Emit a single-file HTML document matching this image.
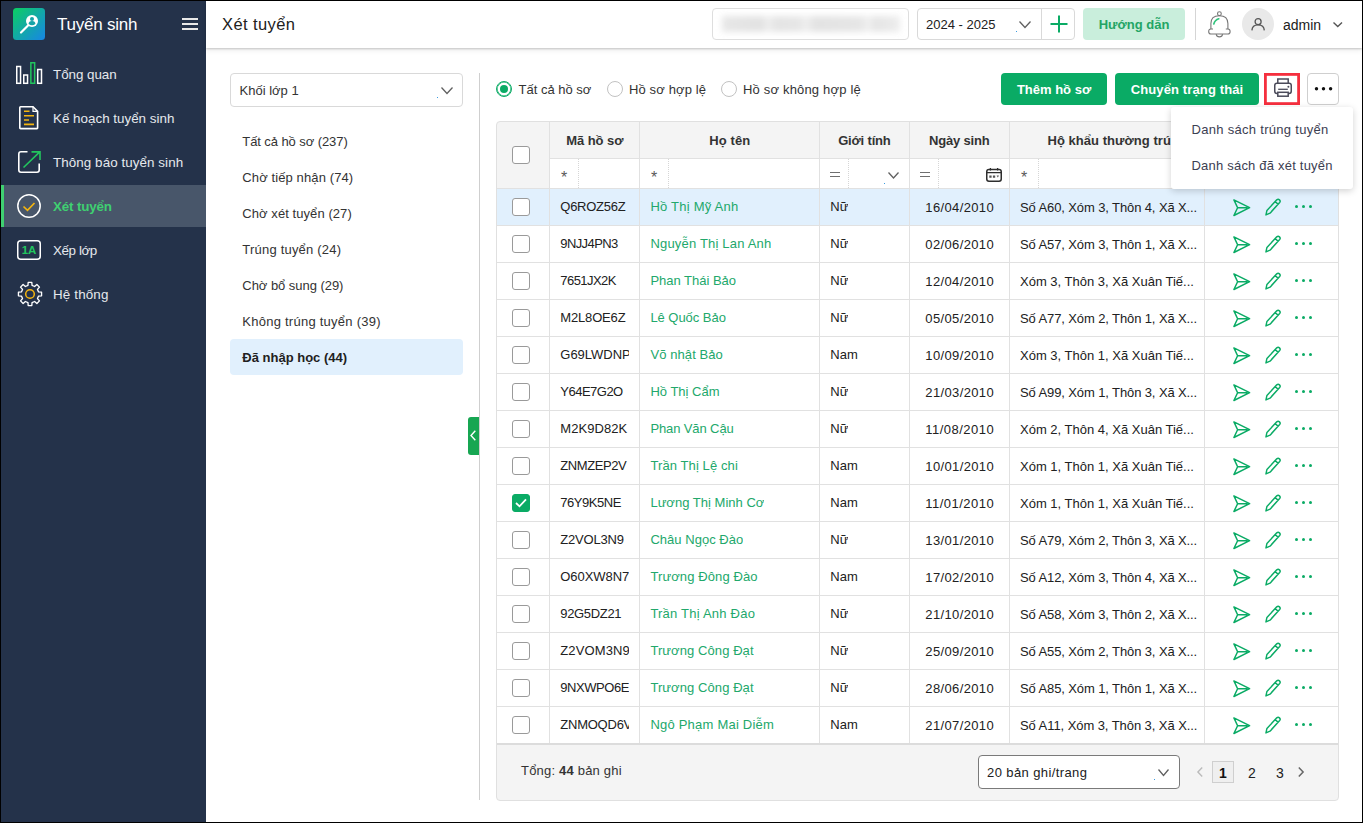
<!DOCTYPE html>
<html><head><meta charset="utf-8"><title>Xét tuyển</title><style>
*{box-sizing:border-box;margin:0;padding:0}
html,body{width:1363px;height:823px;overflow:hidden;background:#fff}
body{font-family:"Liberation Sans",sans-serif;font-size:13px;color:#212121;position:relative}
.a{position:absolute}
.t{position:absolute;white-space:nowrap;line-height:16px}
#frame{position:absolute;left:0;top:0;width:1363px;height:823px;border:1px solid #000;z-index:100}
#side{position:absolute;left:1px;top:1px;width:205px;height:821px;background:#24324a}
.mi{position:absolute;left:1px;width:205px;height:44px;color:#e6e9ed;font-size:13.4px}
.mi .t{left:52px;top:15px}
.mi.act{background:#48566a;color:#3fd071;font-weight:bold}
.mi.act:before{content:"";position:absolute;left:0;top:0;width:3px;height:42px;background:#3fd071}
#top{position:absolute;left:206px;top:1px;width:1156px;height:47px;background:#fff;box-shadow:0 1px 2px rgba(0,0,0,.2),0 3px 5px rgba(0,0,0,.06)}
.box{position:absolute;border:1px solid #d9d9d9;border-radius:4px;background:#fff}
.li{position:absolute;left:230px;width:233px;height:36px;color:#333}
.li .t{left:12.3px;top:11px}
.li.act{background:#e1f0fd;border-radius:4px;font-weight:bold;color:#212121}
.btn{position:absolute;height:32px;border-radius:4px;background:#0aab65;color:#fff;font-weight:bold;font-size:13px;text-align:center;line-height:33px;white-space:nowrap}
#tbl{position:absolute;left:496px;top:121px;width:843px;height:680px;border:1px solid #e0e0e0;border-radius:4px;background:#f4f4f4}
.vl{position:absolute;width:1px;background:#e1e1e1}
.hl{position:absolute;height:1px;background:#e1e1e1}
.dl{position:absolute;width:0;border-left:1px dotted #d6d6d6;top:159px;height:29px}
.th{position:absolute;top:133px;font-weight:bold;color:#333;text-align:center;white-space:nowrap;line-height:16px}
.row{position:absolute;left:497px;width:841px;height:37px;background:#fff}
.row.hi{background:#e1f0fd}
.row .t{top:10px;overflow:hidden}
.row .nm{color:#22a86b}
.cb{position:absolute;width:18px;height:18px;border:1px solid #9a9a9a;border-radius:3px;background:#fff}
.cb.on{background:#0aab65;border-color:#0aab65}
.rad{position:absolute;width:16px;height:16px;border:1px solid #c2c2c2;border-radius:50%;background:#fff}
.rad.on{border-color:#0aab65;box-shadow:inset 0 0 0 0.6px #0aab65}
.rad.on:after{content:"";position:absolute;left:3px;top:3px;width:8px;height:8px;border-radius:50%;background:#0aab65}
svg{position:absolute;overflow:visible}
</style></head><body>
<div id="side"></div>
<svg style="left:13px;top:8px" width="32" height="32" viewBox="0 0 32 32"><defs><linearGradient id="lg" x1="0" y1="0" x2="1" y2="1"><stop offset="0" stop-color="#0bd061"/><stop offset="0.5" stop-color="#12a9a6"/><stop offset="1" stop-color="#1786e6"/></linearGradient></defs>
<rect width="32" height="32" rx="3.5" fill="url(#lg)"/>
<path d="M8 24.5 L15 17.5" stroke="#fff" stroke-width="2.2" stroke-linecap="round"/>
<circle cx="19" cy="13" r="6" fill="#fff"/>
<circle cx="19" cy="11" r="2" fill="#14a3a8"/>
<path d="M15.6 16 Q15.6 13 19 13 Q22.4 13 22.4 16 Q19 18.6 15.6 16Z" fill="#14a3a8"/>
</svg>
<div class="t" style="left:57px;top:14px;font-size:17px;line-height:22px;color:#fff"><span style="letter-spacing:-0.23px">Tuyển sinh</span></div>
<div class="a" style="left:182px;top:18px;width:16px;height:2px;background:#e8e8e8"></div>
<div class="a" style="left:182px;top:23px;width:16px;height:2px;background:#e8e8e8"></div>
<div class="a" style="left:182px;top:28px;width:16px;height:2px;background:#e8e8e8"></div>
<div class="mi" style="top:52px"><div class="t"><span style="letter-spacing:-0.05px">Tổng quan</span></div></div>
<div class="mi" style="top:96px"><div class="t"><span style="letter-spacing:0.00px">Kế hoạch tuyển sinh</span></div></div>
<div class="mi" style="top:140px"><div class="t"><span style="letter-spacing:0.07px">Thông báo tuyển sinh</span></div></div>
<div class="mi act" style="top:185px;height:42px"><div class="t" style="top:14px"><span style="letter-spacing:-0.16px">Xét tuyển</span></div></div>
<div class="mi" style="top:228px"><div class="t"><span style="letter-spacing:-0.41px">Xếp lớp</span></div></div>
<div class="mi" style="top:272px"><div class="t"><span style="letter-spacing:0.15px">Hệ thống</span></div></div>
<svg style="left:16px;top:62px" width="26" height="22" viewBox="0 0 26 22" fill="none" stroke-width="1.5">
<rect x="0.75" y="4.5" width="3.8" height="16.8" stroke="#fff"/>
<rect x="7.75" y="13" width="3.8" height="8.3" stroke="#fff"/>
<rect x="14.85" y="0.75" width="3.8" height="20.5" stroke="#22c55e"/>
<rect x="21.7" y="7.5" width="3.8" height="13.8" stroke="#fff"/></svg>
<svg style="left:19px;top:106px" width="20" height="24" viewBox="0 0 20 24" fill="none">
<path d="M1.6 0.8 H14 L18.6 5.4 V22 Q18.6 22.6 18 22.6 H1.6 Q0.8 22.6 0.8 22 V1.6 Q0.8 0.8 1.6 0.8Z" stroke="#fff" stroke-width="1.6"/>
<path d="M14 0.8 V5.4 H18.6" stroke="#fff" stroke-width="1.2"/>
<path d="M5 5.2 H10.5 M5 9.7 H15 M5 14 H10 M5 18.4 H15" stroke="#f5b50f" stroke-width="1.6"/></svg>
<svg style="left:18px;top:151px" width="23" height="22" viewBox="0 0 23 22" fill="none">
<path d="M9.5 0.8 H3 Q0.8 0.8 0.8 3 V19 Q0.8 21.2 3 21.2 H19 Q21.2 21.2 21.2 19 V12.5" stroke="#fff" stroke-width="1.6"/>
<path d="M5.5 16.5 L21.5 1.2 M13.5 0.9 H22 V9" stroke="#22c55e" stroke-width="1.6"/></svg>
<svg style="left:17px;top:194px" width="24" height="24" viewBox="0 0 24 24" fill="none">
<circle cx="12" cy="12" r="11.2" stroke="#fff" stroke-width="1.5"/>
<path d="M6.5 12.5 L10.5 16.3 L17.5 9" stroke="#f5b50f" stroke-width="1.7"/></svg>
<svg style="left:17px;top:240px" width="24" height="20" viewBox="0 0 24 20" fill="none">
<rect x="0.75" y="0.75" width="22.5" height="18.5" rx="3" stroke="#fff" stroke-width="1.5"/>
<text x="12" y="14.3" text-anchor="middle" font-family="Liberation Sans" font-weight="bold" font-size="11.5" fill="#22c55e">1A</text></svg>
<svg style="left:17px;top:281px" width="26" height="26" viewBox="0 0 26 26" fill="none">
<path d="M10.95 4.44 L11.17 1.44 L14.83 1.44 L15.05 4.44 L17.60 5.50 L19.88 3.53 L22.47 6.12 L20.50 8.40 L21.56 10.95 L24.56 11.17 L24.56 14.83 L21.56 15.05 L20.50 17.60 L22.47 19.88 L19.88 22.47 L17.60 20.50 L15.05 21.56 L14.83 24.56 L11.17 24.56 L10.95 21.56 L8.40 20.50 L6.12 22.47 L3.53 19.88 L5.50 17.60 L4.44 15.05 L1.44 14.83 L1.44 11.17 L4.44 10.95 L5.50 8.40 L3.53 6.12 L6.12 3.53 L8.40 5.50Z" stroke="#fff" stroke-width="1.35" stroke-linejoin="round"/>
<circle cx="13" cy="13" r="4.3" stroke="#f5b50f" stroke-width="1.5"/></svg>
<div id="top"></div>
<div class="t" style="left:222px;top:13px;font-size:16.5px;line-height:22px;color:#212121"><span style="letter-spacing:0.41px">Xét tuyển</span></div>
<div class="box" style="left:712px;top:8px;width:197px;height:32px;border-color:#dedede"></div>
<div class="a" style="left:722px;top:16px;width:178px;height:16px;filter:blur(3px);opacity:.44;background:linear-gradient(90deg,#c9c9c9 0,#bdbdbd 22%,#dcdcdc 26%,#c3c3c3 30%,#c8c8c8 44%,#dedede 47%,#bfbfbf 52%,#c6c6c6 78%,#e0e0e0 82%,#c4c4c4 86%,#d6d6d6 100%)"></div>
<div class="box" style="left:917px;top:8px;width:158px;height:32px"></div>
<div class="a" style="left:1041px;top:9px;width:1px;height:30px;background:#d9d9d9"></div>
<div class="t" style="left:926px;top:17px;color:#212121">2024 - 2025</div>
<svg style="left:1019px;top:21px" width="12" height="7" viewBox="0 0 12 7"><path d="M0.5 0.5 L6.0 6.5 L11.5 0.5" fill="none" stroke="#606060" stroke-width="1.3"/></svg>
<div class="a" style="left:1016px;top:31px;width:1px;height:1px;background:#3b9be0"></div>
<svg style="left:1050px;top:15px" width="18" height="18" viewBox="0 0 18 18"><path d="M9 0.5 V17.5 M0.5 9 H17.5" stroke="#0aab65" stroke-width="2"/></svg>
<div class="a" style="left:1083px;top:8px;width:102px;height:32px;border-radius:4px;background:#c9eedc;color:#23a565;font-weight:bold;font-size:13px;line-height:33px;text-align:center">Hướng dẫn</div>
<div class="a" style="left:1195px;top:8px;width:1px;height:32px;background:#d5d5d5"></div>
<svg style="left:1208px;top:10.5px" width="23" height="27" viewBox="0 0 23 27" fill="none" stroke="#777" stroke-width="1.1">
<circle cx="11.4" cy="2.7" r="1.9"/>
<path d="M2.9 18 V12.6 Q2.9 4.7 11.4 4.7 Q19.9 4.7 19.9 12.6 V18"/>
<path d="M5 18 H2.9 Q0.7 18 0.7 20.4 Q0.7 23 2.9 23 H19.9 Q22.1 23 22.1 20.4 Q22.1 18 19.9 18 H17.8"/>
<path d="M8.2 23.2 Q8.6 25.9 11.4 25.9 Q14.2 25.9 14.6 23.2"/>
<path d="M5.8 13 Q6.8 8.9 10.8 7.7" stroke="#2fc47c" stroke-width="1.6" stroke-linecap="round"/></svg>
<div class="a" style="left:1242px;top:8px;width:32px;height:32px;border-radius:50%;background:#e9e9e9"></div>
<svg style="left:1251px;top:17.5px" width="14" height="13" viewBox="0 0 14 13" fill="none" stroke="#555" stroke-width="1.3">
<circle cx="7.1" cy="3.7" r="3"/><path d="M0.9 12.4 Q1.2 6.8 7.1 6.8 Q13 6.8 13.3 12.4"/></svg>
<div class="t" style="left:1283px;top:16.5px;font-size:14px;color:#212121">admin</div>
<svg style="left:1332.5px;top:21.5px" width="9.5" height="5" viewBox="0 0 9.5 5"><path d="M0.5 0.5 L4.75 4.5 L9.0 0.5" fill="none" stroke="#555" stroke-width="1.4"/></svg>
<div class="box" style="left:230px;top:73px;width:233px;height:34px"></div>
<div class="t" style="left:239.5px;top:83px;color:#333">Khối lớp 1</div>
<svg style="left:441px;top:87px" width="12" height="7" viewBox="0 0 12 7"><path d="M0.5 0.5 L6.0 6.5 L11.5 0.5" fill="none" stroke="#606060" stroke-width="1.3"/></svg>
<div class="a" style="left:437px;top:97px;width:1px;height:1px;background:#3b9be0"></div>
<div class="li" style="top:123px"><div class="t"><span style="letter-spacing:-0.08px">Tất cả hồ sơ (237)</span></div></div>
<div class="li" style="top:159px"><div class="t"><span style="letter-spacing:0.11px">Chờ tiếp nhận (74)</span></div></div>
<div class="li" style="top:195px"><div class="t"><span style="letter-spacing:0.07px">Chờ xét tuyển (27)</span></div></div>
<div class="li" style="top:231px"><div class="t"><span style="letter-spacing:0.21px">Trúng tuyển (24)</span></div></div>
<div class="li" style="top:267px"><div class="t"><span style="letter-spacing:-0.04px">Chờ bổ sung (29)</span></div></div>
<div class="li" style="top:303px"><div class="t"><span style="letter-spacing:0.25px">Không trúng tuyển (39)</span></div></div>
<div class="li act" style="top:339px"><div class="t"><span style="letter-spacing:0.00px">Đã nhập học (44)</span></div></div>
<div class="a" style="left:479px;top:73px;width:1px;height:727px;background:#cfcfcf"></div>
<div class="a" style="left:468px;top:417px;width:11px;height:37.5px;background:#17a652;border-radius:3px 0 0 3px"></div>
<svg style="left:469.5px;top:430px" width="6" height="11" viewBox="0 0 6 11"><path d="M5.3 0.7 L1 5.5 L5.3 10.3" fill="none" stroke="#fff" stroke-width="1.4"/></svg>
<div class="rad on" style="left:496px;top:81px"></div><div class="t" style="left:518.5px;top:82px;color:#333">Tất cả hồ sơ</div>
<div class="rad" style="left:607px;top:81px"></div><div class="t" style="left:629px;top:82px;color:#333"><span style="letter-spacing:0.13px">Hồ sơ hợp lệ</span></div>
<div class="rad" style="left:721px;top:81px"></div><div class="t" style="left:743px;top:82px;color:#333"><span style="letter-spacing:0.18px">Hồ sơ không hợp lệ</span></div>
<div class="btn" style="left:1001px;top:73px;width:106px">Thêm hồ sơ</div>
<div class="btn" style="left:1115px;top:73px;width:144px"><span style="letter-spacing:0.13px">Chuyển trạng thái</span></div>
<svg style="left:1264px;top:73px" width="36" height="32" viewBox="0 0 36 32"><rect x="1.4" y="1.4" width="33.2" height="29.2" fill="#fff" stroke="#f52f3e" stroke-width="2.8"/></svg>
<svg style="left:1273.8px;top:78.2px" width="18" height="19" viewBox="0 0 18 19" fill="none" stroke="#4b4b5a" stroke-width="1.5">
<path d="M3.8 5.3 V0.9 H14.2 V5.3"/>
<rect x="0.75" y="5.3" width="16.5" height="10.2" rx="2.2"/>
<path d="M4.2 11.3 H13.8" stroke-width="1.3"/>
<rect x="3.8" y="14.3" width="10.4" height="3.9" fill="#fff"/>
<circle cx="14.4" cy="8.8" r="1" fill="#4b4b5a" stroke="none"/></svg>
<div class="box" style="left:1307px;top:73px;width:32px;height:32px;border-color:#cfcfcf"></div>
<svg style="left:1307px;top:73px" width="32" height="32" viewBox="0 0 32 32"><circle cx="9.5" cy="15.7" r="1.7" fill="#111"/><circle cx="16.5" cy="15.7" r="1.7" fill="#111"/><circle cx="23.6" cy="15.7" r="1.7" fill="#111"/></svg>
<div id="tbl"></div>
<div class="a" style="left:550px;top:159px;width:654px;height:29px;background:#fff"></div>
<div class="hl" style="left:549px;top:158px;width:789px"></div>
<div class="hl" style="left:497px;top:188px;width:841px"></div>
<div class="th" style="left:566.2px;text-align:left"><span style="letter-spacing:-0.05px">Mã hồ sơ</span></div>
<div class="th" style="left:709.2px;text-align:left"><span style="letter-spacing:0.11px">Họ tên</span></div>
<div class="th" style="left:838.2px;text-align:left"><span style="letter-spacing:-0.18px">Giới tính</span></div>
<div class="th" style="left:929px;text-align:left"><span style="letter-spacing:-0.17px">Ngày sinh</span></div>
<div class="th" style="left:1047.5px;text-align:left"><span style="letter-spacing:0.04px">Hộ khẩu thường trú</span></div>
<div class="cb" style="left:512px;top:146px"></div>
<div class="dl" style="left:578px"></div>
<div class="dl" style="left:668px"></div>
<div class="dl" style="left:848px"></div>
<div class="dl" style="left:938px"></div>
<div class="dl" style="left:1038px"></div>
<div class="t" style="left:561px;top:169.5px;font-size:16px;color:#5a5a5a">*</div>
<div class="t" style="left:651px;top:169.5px;font-size:16px;color:#5a5a5a">*</div>
<div class="t" style="left:1021px;top:169.5px;font-size:16px;color:#5a5a5a">*</div>
<div class="a" style="left:830px;top:172px;width:10px;height:1px;background:#6f6f6f"></div><div class="a" style="left:830px;top:176px;width:10px;height:1px;background:#6f6f6f"></div>
<div class="a" style="left:920px;top:172px;width:10px;height:1px;background:#6f6f6f"></div><div class="a" style="left:920px;top:176px;width:10px;height:1px;background:#6f6f6f"></div>
<svg style="left:888px;top:172px" width="11" height="6.5" viewBox="0 0 11 6.5"><path d="M0.5 0.5 L5.5 6.0 L10.5 0.5" fill="none" stroke="#606060" stroke-width="1.3"/></svg>
<div class="a" style="left:884px;top:183px;width:1px;height:1px;background:#3b9be0"></div>
<svg style="left:986px;top:168px" width="16" height="14" viewBox="0 0 16 14" fill="none" stroke="#2e2e2e" stroke-width="1.5">
<rect x="0.75" y="1.6" width="14.5" height="11.6" rx="2.2"/><path d="M0.7 4.6 H15.3 M4.4 0 V2.6 M11.6 0 V2.6" stroke-width="1.3"/>
<path d="M3.3 8.6 H5.6 M6.9 8.6 H9.2" stroke-width="2.4" stroke="#555"/><path d="M10.6 7.6 H13 L11.8 9.4Z" fill="#555" stroke="none"/></svg>
<div class="row hi" style="top:189px;height:36px"><div class="cb" style="left:15px;top:9px"></div><div class="t" style="left:63.3px;width:68.6px"><span style="letter-spacing:-0.27px">Q6ROZ56Z</span></div><div class="t nm" style="left:153.4px"><span style="letter-spacing:0.23px">Hồ Thị Mỹ Anh</span></div><div class="t" style="left:333.3px">Nữ</div><div class="t" style="left:428.3px;top:11px"><span style="letter-spacing:0.37px">16/04/2010</span></div><div class="t" style="left:523px;top:11px"><span style="letter-spacing:-0.11px">Số A60, Xóm 3, Thôn 4, Xã X...</span></div><svg style="left:736px;top:9.6px" width="18" height="18" viewBox="0 0 18 18"><path d="M0.9 0.9 L16.6 8.7 L0.9 16.5 L4.6 8.7Z M4.6 8.7 H14.5" fill="none" stroke="#0aab65" stroke-width="1.5" stroke-linejoin="round"/></svg><svg style="left:768px;top:8.8px" width="16.4" height="18" viewBox="0 0 17 18"><path d="M1 17.2 L2 12.6 L12.2 1.6 Q13.6 0.4 15 1.6 Q16.4 3 15.2 4.4 L5.2 15.4Z M10.6 3.4 L13.6 6.2" fill="none" stroke="#0aab65" stroke-width="1.5" stroke-linejoin="round"/></svg><div class="a" style="left:798px;top:16px;width:3px;height:3px;border-radius:50%;background:#0aab65"></div><div class="a" style="left:805px;top:16px;width:3px;height:3px;border-radius:50%;background:#0aab65"></div><div class="a" style="left:812px;top:16px;width:3px;height:3px;border-radius:50%;background:#0aab65"></div></div>
<div class="hl" style="left:497px;top:225px;width:841px"></div>
<div class="row" style="top:226px;height:36px"><div class="cb" style="left:15px;top:9px"></div><div class="t" style="left:63.3px;width:68.6px"><span style="letter-spacing:-0.60px">9NJJ4PN3</span></div><div class="t nm" style="left:153.4px"><span style="letter-spacing:0.19px">Nguyễn Thị Lan Anh</span></div><div class="t" style="left:333.3px">Nữ</div><div class="t" style="left:428.3px;top:11px"><span style="letter-spacing:0.37px">02/06/2010</span></div><div class="t" style="left:523px;top:11px"><span style="letter-spacing:-0.11px">Số A57, Xóm 3, Thôn 1, Xã X...</span></div><svg style="left:736px;top:9.6px" width="18" height="18" viewBox="0 0 18 18"><path d="M0.9 0.9 L16.6 8.7 L0.9 16.5 L4.6 8.7Z M4.6 8.7 H14.5" fill="none" stroke="#0aab65" stroke-width="1.5" stroke-linejoin="round"/></svg><svg style="left:768px;top:8.8px" width="16.4" height="18" viewBox="0 0 17 18"><path d="M1 17.2 L2 12.6 L12.2 1.6 Q13.6 0.4 15 1.6 Q16.4 3 15.2 4.4 L5.2 15.4Z M10.6 3.4 L13.6 6.2" fill="none" stroke="#0aab65" stroke-width="1.5" stroke-linejoin="round"/></svg><div class="a" style="left:798px;top:16px;width:3px;height:3px;border-radius:50%;background:#0aab65"></div><div class="a" style="left:805px;top:16px;width:3px;height:3px;border-radius:50%;background:#0aab65"></div><div class="a" style="left:812px;top:16px;width:3px;height:3px;border-radius:50%;background:#0aab65"></div></div>
<div class="hl" style="left:497px;top:262px;width:841px"></div>
<div class="row" style="top:263px;height:36px"><div class="cb" style="left:15px;top:9px"></div><div class="t" style="left:63.3px;width:68.6px"><span style="letter-spacing:-0.56px">7651JX2K</span></div><div class="t nm" style="left:153.4px"><span style="letter-spacing:-0.01px">Phan Thái Bảo</span></div><div class="t" style="left:333.3px">Nữ</div><div class="t" style="left:428.3px;top:11px"><span style="letter-spacing:0.37px">12/04/2010</span></div><div class="t" style="left:523px;top:11px"><span style="letter-spacing:-0.00px">Xóm 3, Thôn 3, Xã Xuân Tiế...</span></div><svg style="left:736px;top:9.6px" width="18" height="18" viewBox="0 0 18 18"><path d="M0.9 0.9 L16.6 8.7 L0.9 16.5 L4.6 8.7Z M4.6 8.7 H14.5" fill="none" stroke="#0aab65" stroke-width="1.5" stroke-linejoin="round"/></svg><svg style="left:768px;top:8.8px" width="16.4" height="18" viewBox="0 0 17 18"><path d="M1 17.2 L2 12.6 L12.2 1.6 Q13.6 0.4 15 1.6 Q16.4 3 15.2 4.4 L5.2 15.4Z M10.6 3.4 L13.6 6.2" fill="none" stroke="#0aab65" stroke-width="1.5" stroke-linejoin="round"/></svg><div class="a" style="left:798px;top:16px;width:3px;height:3px;border-radius:50%;background:#0aab65"></div><div class="a" style="left:805px;top:16px;width:3px;height:3px;border-radius:50%;background:#0aab65"></div><div class="a" style="left:812px;top:16px;width:3px;height:3px;border-radius:50%;background:#0aab65"></div></div>
<div class="hl" style="left:497px;top:299px;width:841px"></div>
<div class="row" style="top:300px;height:36px"><div class="cb" style="left:15px;top:9px"></div><div class="t" style="left:63.3px;width:68.6px"><span style="letter-spacing:-0.17px">M2L8OE6Z</span></div><div class="t nm" style="left:153.4px"><span style="letter-spacing:-0.04px">Lê Quốc Bảo</span></div><div class="t" style="left:333.3px">Nữ</div><div class="t" style="left:428.3px;top:11px"><span style="letter-spacing:0.37px">05/05/2010</span></div><div class="t" style="left:523px;top:11px"><span style="letter-spacing:-0.11px">Số A77, Xóm 2, Thôn 1, Xã X...</span></div><svg style="left:736px;top:9.6px" width="18" height="18" viewBox="0 0 18 18"><path d="M0.9 0.9 L16.6 8.7 L0.9 16.5 L4.6 8.7Z M4.6 8.7 H14.5" fill="none" stroke="#0aab65" stroke-width="1.5" stroke-linejoin="round"/></svg><svg style="left:768px;top:8.8px" width="16.4" height="18" viewBox="0 0 17 18"><path d="M1 17.2 L2 12.6 L12.2 1.6 Q13.6 0.4 15 1.6 Q16.4 3 15.2 4.4 L5.2 15.4Z M10.6 3.4 L13.6 6.2" fill="none" stroke="#0aab65" stroke-width="1.5" stroke-linejoin="round"/></svg><div class="a" style="left:798px;top:16px;width:3px;height:3px;border-radius:50%;background:#0aab65"></div><div class="a" style="left:805px;top:16px;width:3px;height:3px;border-radius:50%;background:#0aab65"></div><div class="a" style="left:812px;top:16px;width:3px;height:3px;border-radius:50%;background:#0aab65"></div></div>
<div class="hl" style="left:497px;top:336px;width:841px"></div>
<div class="row" style="top:337px;height:36px"><div class="cb" style="left:15px;top:9px"></div><div class="t" style="left:63.3px;width:68.6px"><span style="letter-spacing:-0.01px">G69LWDNP</span></div><div class="t nm" style="left:153.4px"><span style="letter-spacing:0.09px">Võ nhật Bảo</span></div><div class="t" style="left:333.3px">Nam</div><div class="t" style="left:428.3px;top:11px"><span style="letter-spacing:0.37px">10/09/2010</span></div><div class="t" style="left:523px;top:11px"><span style="letter-spacing:-0.00px">Xóm 3, Thôn 1, Xã Xuân Tiế...</span></div><svg style="left:736px;top:9.6px" width="18" height="18" viewBox="0 0 18 18"><path d="M0.9 0.9 L16.6 8.7 L0.9 16.5 L4.6 8.7Z M4.6 8.7 H14.5" fill="none" stroke="#0aab65" stroke-width="1.5" stroke-linejoin="round"/></svg><svg style="left:768px;top:8.8px" width="16.4" height="18" viewBox="0 0 17 18"><path d="M1 17.2 L2 12.6 L12.2 1.6 Q13.6 0.4 15 1.6 Q16.4 3 15.2 4.4 L5.2 15.4Z M10.6 3.4 L13.6 6.2" fill="none" stroke="#0aab65" stroke-width="1.5" stroke-linejoin="round"/></svg><div class="a" style="left:798px;top:16px;width:3px;height:3px;border-radius:50%;background:#0aab65"></div><div class="a" style="left:805px;top:16px;width:3px;height:3px;border-radius:50%;background:#0aab65"></div><div class="a" style="left:812px;top:16px;width:3px;height:3px;border-radius:50%;background:#0aab65"></div></div>
<div class="hl" style="left:497px;top:373px;width:841px"></div>
<div class="row" style="top:374px;height:36px"><div class="cb" style="left:15px;top:9px"></div><div class="t" style="left:63.3px;width:68.6px"><span style="letter-spacing:-0.51px">Y64E7G2O</span></div><div class="t nm" style="left:153.4px"><span style="letter-spacing:-0.00px">Hồ Thị Cẩm</span></div><div class="t" style="left:333.3px">Nữ</div><div class="t" style="left:428.3px;top:11px"><span style="letter-spacing:0.37px">21/03/2010</span></div><div class="t" style="left:523px;top:11px"><span style="letter-spacing:-0.11px">Số A99, Xóm 1, Thôn 3, Xã X...</span></div><svg style="left:736px;top:9.6px" width="18" height="18" viewBox="0 0 18 18"><path d="M0.9 0.9 L16.6 8.7 L0.9 16.5 L4.6 8.7Z M4.6 8.7 H14.5" fill="none" stroke="#0aab65" stroke-width="1.5" stroke-linejoin="round"/></svg><svg style="left:768px;top:8.8px" width="16.4" height="18" viewBox="0 0 17 18"><path d="M1 17.2 L2 12.6 L12.2 1.6 Q13.6 0.4 15 1.6 Q16.4 3 15.2 4.4 L5.2 15.4Z M10.6 3.4 L13.6 6.2" fill="none" stroke="#0aab65" stroke-width="1.5" stroke-linejoin="round"/></svg><div class="a" style="left:798px;top:16px;width:3px;height:3px;border-radius:50%;background:#0aab65"></div><div class="a" style="left:805px;top:16px;width:3px;height:3px;border-radius:50%;background:#0aab65"></div><div class="a" style="left:812px;top:16px;width:3px;height:3px;border-radius:50%;background:#0aab65"></div></div>
<div class="hl" style="left:497px;top:410px;width:841px"></div>
<div class="row" style="top:411px;height:36px"><div class="cb" style="left:15px;top:9px"></div><div class="t" style="left:63.3px;width:68.6px"><span style="letter-spacing:0.07px">M2K9D82K</span></div><div class="t nm" style="left:153.4px"><span style="letter-spacing:-0.11px">Phan Văn Cậu</span></div><div class="t" style="left:333.3px">Nữ</div><div class="t" style="left:428.3px;top:11px"><span style="letter-spacing:0.48px">11/08/2010</span></div><div class="t" style="left:523px;top:11px"><span style="letter-spacing:-0.00px">Xóm 2, Thôn 4, Xã Xuân Tiế...</span></div><svg style="left:736px;top:9.6px" width="18" height="18" viewBox="0 0 18 18"><path d="M0.9 0.9 L16.6 8.7 L0.9 16.5 L4.6 8.7Z M4.6 8.7 H14.5" fill="none" stroke="#0aab65" stroke-width="1.5" stroke-linejoin="round"/></svg><svg style="left:768px;top:8.8px" width="16.4" height="18" viewBox="0 0 17 18"><path d="M1 17.2 L2 12.6 L12.2 1.6 Q13.6 0.4 15 1.6 Q16.4 3 15.2 4.4 L5.2 15.4Z M10.6 3.4 L13.6 6.2" fill="none" stroke="#0aab65" stroke-width="1.5" stroke-linejoin="round"/></svg><div class="a" style="left:798px;top:16px;width:3px;height:3px;border-radius:50%;background:#0aab65"></div><div class="a" style="left:805px;top:16px;width:3px;height:3px;border-radius:50%;background:#0aab65"></div><div class="a" style="left:812px;top:16px;width:3px;height:3px;border-radius:50%;background:#0aab65"></div></div>
<div class="hl" style="left:497px;top:447px;width:841px"></div>
<div class="row" style="top:448px;height:36px"><div class="cb" style="left:15px;top:9px"></div><div class="t" style="left:63.3px;width:68.6px"><span style="letter-spacing:-0.43px">ZNMZEP2V</span></div><div class="t nm" style="left:153.4px"><span style="letter-spacing:0.10px">Trần Thị Lệ chi</span></div><div class="t" style="left:333.3px">Nam</div><div class="t" style="left:428.3px;top:11px"><span style="letter-spacing:0.37px">10/01/2010</span></div><div class="t" style="left:523px;top:11px"><span style="letter-spacing:-0.00px">Xóm 1, Thôn 1, Xã Xuân Tiế...</span></div><svg style="left:736px;top:9.6px" width="18" height="18" viewBox="0 0 18 18"><path d="M0.9 0.9 L16.6 8.7 L0.9 16.5 L4.6 8.7Z M4.6 8.7 H14.5" fill="none" stroke="#0aab65" stroke-width="1.5" stroke-linejoin="round"/></svg><svg style="left:768px;top:8.8px" width="16.4" height="18" viewBox="0 0 17 18"><path d="M1 17.2 L2 12.6 L12.2 1.6 Q13.6 0.4 15 1.6 Q16.4 3 15.2 4.4 L5.2 15.4Z M10.6 3.4 L13.6 6.2" fill="none" stroke="#0aab65" stroke-width="1.5" stroke-linejoin="round"/></svg><div class="a" style="left:798px;top:16px;width:3px;height:3px;border-radius:50%;background:#0aab65"></div><div class="a" style="left:805px;top:16px;width:3px;height:3px;border-radius:50%;background:#0aab65"></div><div class="a" style="left:812px;top:16px;width:3px;height:3px;border-radius:50%;background:#0aab65"></div></div>
<div class="hl" style="left:497px;top:484px;width:841px"></div>
<div class="row" style="top:485px;height:36px"><div class="cb on" style="left:15px;top:9px"></div><div class="t" style="left:63.3px;width:68.6px"><span style="letter-spacing:-0.45px">76Y9K5NE</span></div><div class="t nm" style="left:153.4px"><span style="letter-spacing:0.02px">Lương Thị Minh Cơ</span></div><div class="t" style="left:333.3px">Nam</div><div class="t" style="left:428.3px;top:11px"><span style="letter-spacing:0.48px">11/01/2010</span></div><div class="t" style="left:523px;top:11px"><span style="letter-spacing:-0.00px">Xóm 1, Thôn 1, Xã Xuân Tiế...</span></div><svg style="left:736px;top:9.6px" width="18" height="18" viewBox="0 0 18 18"><path d="M0.9 0.9 L16.6 8.7 L0.9 16.5 L4.6 8.7Z M4.6 8.7 H14.5" fill="none" stroke="#0aab65" stroke-width="1.5" stroke-linejoin="round"/></svg><svg style="left:768px;top:8.8px" width="16.4" height="18" viewBox="0 0 17 18"><path d="M1 17.2 L2 12.6 L12.2 1.6 Q13.6 0.4 15 1.6 Q16.4 3 15.2 4.4 L5.2 15.4Z M10.6 3.4 L13.6 6.2" fill="none" stroke="#0aab65" stroke-width="1.5" stroke-linejoin="round"/></svg><div class="a" style="left:798px;top:16px;width:3px;height:3px;border-radius:50%;background:#0aab65"></div><div class="a" style="left:805px;top:16px;width:3px;height:3px;border-radius:50%;background:#0aab65"></div><div class="a" style="left:812px;top:16px;width:3px;height:3px;border-radius:50%;background:#0aab65"></div></div>
<svg style="left:515px;top:498px" width="12" height="10" viewBox="0 0 12 10"><path d="M1 5 L4.5 8.3 L11 1.3" fill="none" stroke="#fff" stroke-width="1.8"/></svg>
<div class="hl" style="left:497px;top:521px;width:841px"></div>
<div class="row" style="top:522px;height:36px"><div class="cb" style="left:15px;top:9px"></div><div class="t" style="left:63.3px;width:68.6px"><span style="letter-spacing:-0.21px">Z2VOL3N9</span></div><div class="t nm" style="left:153.4px"><span style="letter-spacing:0.03px">Châu Ngọc Đào</span></div><div class="t" style="left:333.3px">Nữ</div><div class="t" style="left:428.3px;top:11px"><span style="letter-spacing:0.37px">13/01/2010</span></div><div class="t" style="left:523px;top:11px"><span style="letter-spacing:-0.11px">Số A79, Xóm 2, Thôn 3, Xã X...</span></div><svg style="left:736px;top:9.6px" width="18" height="18" viewBox="0 0 18 18"><path d="M0.9 0.9 L16.6 8.7 L0.9 16.5 L4.6 8.7Z M4.6 8.7 H14.5" fill="none" stroke="#0aab65" stroke-width="1.5" stroke-linejoin="round"/></svg><svg style="left:768px;top:8.8px" width="16.4" height="18" viewBox="0 0 17 18"><path d="M1 17.2 L2 12.6 L12.2 1.6 Q13.6 0.4 15 1.6 Q16.4 3 15.2 4.4 L5.2 15.4Z M10.6 3.4 L13.6 6.2" fill="none" stroke="#0aab65" stroke-width="1.5" stroke-linejoin="round"/></svg><div class="a" style="left:798px;top:16px;width:3px;height:3px;border-radius:50%;background:#0aab65"></div><div class="a" style="left:805px;top:16px;width:3px;height:3px;border-radius:50%;background:#0aab65"></div><div class="a" style="left:812px;top:16px;width:3px;height:3px;border-radius:50%;background:#0aab65"></div></div>
<div class="hl" style="left:497px;top:558px;width:841px"></div>
<div class="row" style="top:559px;height:36px"><div class="cb" style="left:15px;top:9px"></div><div class="t" style="left:63.3px;width:68.6px"><span style="letter-spacing:-0.05px">O60XW8N7</span></div><div class="t nm" style="left:153.4px"><span style="letter-spacing:0.11px">Trương Đông Đào</span></div><div class="t" style="left:333.3px">Nam</div><div class="t" style="left:428.3px;top:11px"><span style="letter-spacing:0.37px">17/02/2010</span></div><div class="t" style="left:523px;top:11px"><span style="letter-spacing:-0.11px">Số A12, Xóm 3, Thôn 4, Xã X...</span></div><svg style="left:736px;top:9.6px" width="18" height="18" viewBox="0 0 18 18"><path d="M0.9 0.9 L16.6 8.7 L0.9 16.5 L4.6 8.7Z M4.6 8.7 H14.5" fill="none" stroke="#0aab65" stroke-width="1.5" stroke-linejoin="round"/></svg><svg style="left:768px;top:8.8px" width="16.4" height="18" viewBox="0 0 17 18"><path d="M1 17.2 L2 12.6 L12.2 1.6 Q13.6 0.4 15 1.6 Q16.4 3 15.2 4.4 L5.2 15.4Z M10.6 3.4 L13.6 6.2" fill="none" stroke="#0aab65" stroke-width="1.5" stroke-linejoin="round"/></svg><div class="a" style="left:798px;top:16px;width:3px;height:3px;border-radius:50%;background:#0aab65"></div><div class="a" style="left:805px;top:16px;width:3px;height:3px;border-radius:50%;background:#0aab65"></div><div class="a" style="left:812px;top:16px;width:3px;height:3px;border-radius:50%;background:#0aab65"></div></div>
<div class="hl" style="left:497px;top:595px;width:841px"></div>
<div class="row" style="top:596px;height:36px"><div class="cb" style="left:15px;top:9px"></div><div class="t" style="left:63.3px;width:68.6px"><span style="letter-spacing:-0.34px">92G5DZ21</span></div><div class="t nm" style="left:153.4px"><span style="letter-spacing:0.22px">Trần Thị Anh Đào</span></div><div class="t" style="left:333.3px">Nữ</div><div class="t" style="left:428.3px;top:11px"><span style="letter-spacing:0.37px">21/10/2010</span></div><div class="t" style="left:523px;top:11px"><span style="letter-spacing:-0.11px">Số A58, Xóm 3, Thôn 2, Xã X...</span></div><svg style="left:736px;top:9.6px" width="18" height="18" viewBox="0 0 18 18"><path d="M0.9 0.9 L16.6 8.7 L0.9 16.5 L4.6 8.7Z M4.6 8.7 H14.5" fill="none" stroke="#0aab65" stroke-width="1.5" stroke-linejoin="round"/></svg><svg style="left:768px;top:8.8px" width="16.4" height="18" viewBox="0 0 17 18"><path d="M1 17.2 L2 12.6 L12.2 1.6 Q13.6 0.4 15 1.6 Q16.4 3 15.2 4.4 L5.2 15.4Z M10.6 3.4 L13.6 6.2" fill="none" stroke="#0aab65" stroke-width="1.5" stroke-linejoin="round"/></svg><div class="a" style="left:798px;top:16px;width:3px;height:3px;border-radius:50%;background:#0aab65"></div><div class="a" style="left:805px;top:16px;width:3px;height:3px;border-radius:50%;background:#0aab65"></div><div class="a" style="left:812px;top:16px;width:3px;height:3px;border-radius:50%;background:#0aab65"></div></div>
<div class="hl" style="left:497px;top:632px;width:841px"></div>
<div class="row" style="top:633px;height:36px"><div class="cb" style="left:15px;top:9px"></div><div class="t" style="left:63.3px;width:68.6px"><span style="letter-spacing:0.12px">Z2VOM3N9</span></div><div class="t nm" style="left:153.4px"><span style="letter-spacing:0.08px">Trương Công Đạt</span></div><div class="t" style="left:333.3px">Nữ</div><div class="t" style="left:428.3px;top:11px"><span style="letter-spacing:0.37px">25/09/2010</span></div><div class="t" style="left:523px;top:11px"><span style="letter-spacing:-0.11px">Số A55, Xóm 2, Thôn 3, Xã X...</span></div><svg style="left:736px;top:9.6px" width="18" height="18" viewBox="0 0 18 18"><path d="M0.9 0.9 L16.6 8.7 L0.9 16.5 L4.6 8.7Z M4.6 8.7 H14.5" fill="none" stroke="#0aab65" stroke-width="1.5" stroke-linejoin="round"/></svg><svg style="left:768px;top:8.8px" width="16.4" height="18" viewBox="0 0 17 18"><path d="M1 17.2 L2 12.6 L12.2 1.6 Q13.6 0.4 15 1.6 Q16.4 3 15.2 4.4 L5.2 15.4Z M10.6 3.4 L13.6 6.2" fill="none" stroke="#0aab65" stroke-width="1.5" stroke-linejoin="round"/></svg><div class="a" style="left:798px;top:16px;width:3px;height:3px;border-radius:50%;background:#0aab65"></div><div class="a" style="left:805px;top:16px;width:3px;height:3px;border-radius:50%;background:#0aab65"></div><div class="a" style="left:812px;top:16px;width:3px;height:3px;border-radius:50%;background:#0aab65"></div></div>
<div class="hl" style="left:497px;top:669px;width:841px"></div>
<div class="row" style="top:670px;height:36px"><div class="cb" style="left:15px;top:9px"></div><div class="t" style="left:63.3px;width:68.6px"><span style="letter-spacing:-0.46px">9NXWPO6E</span></div><div class="t nm" style="left:153.4px"><span style="letter-spacing:0.08px">Trương Công Đạt</span></div><div class="t" style="left:333.3px">Nữ</div><div class="t" style="left:428.3px;top:11px"><span style="letter-spacing:0.37px">28/06/2010</span></div><div class="t" style="left:523px;top:11px"><span style="letter-spacing:-0.11px">Số A85, Xóm 1, Thôn 1, Xã X...</span></div><svg style="left:736px;top:9.6px" width="18" height="18" viewBox="0 0 18 18"><path d="M0.9 0.9 L16.6 8.7 L0.9 16.5 L4.6 8.7Z M4.6 8.7 H14.5" fill="none" stroke="#0aab65" stroke-width="1.5" stroke-linejoin="round"/></svg><svg style="left:768px;top:8.8px" width="16.4" height="18" viewBox="0 0 17 18"><path d="M1 17.2 L2 12.6 L12.2 1.6 Q13.6 0.4 15 1.6 Q16.4 3 15.2 4.4 L5.2 15.4Z M10.6 3.4 L13.6 6.2" fill="none" stroke="#0aab65" stroke-width="1.5" stroke-linejoin="round"/></svg><div class="a" style="left:798px;top:16px;width:3px;height:3px;border-radius:50%;background:#0aab65"></div><div class="a" style="left:805px;top:16px;width:3px;height:3px;border-radius:50%;background:#0aab65"></div><div class="a" style="left:812px;top:16px;width:3px;height:3px;border-radius:50%;background:#0aab65"></div></div>
<div class="hl" style="left:497px;top:706px;width:841px"></div>
<div class="row" style="top:707px;height:36px"><div class="cb" style="left:15px;top:9px"></div><div class="t" style="left:63.3px;width:68.6px"><span style="letter-spacing:-0.24px">ZNMOQD6V</span></div><div class="t nm" style="left:153.4px"><span style="letter-spacing:0.22px">Ngô Phạm Mai Diễm</span></div><div class="t" style="left:333.3px">Nam</div><div class="t" style="left:428.3px;top:11px"><span style="letter-spacing:0.37px">21/07/2010</span></div><div class="t" style="left:523px;top:11px"><span style="letter-spacing:-0.07px">Số A11, Xóm 3, Thôn 3, Xã X...</span></div><svg style="left:736px;top:9.6px" width="18" height="18" viewBox="0 0 18 18"><path d="M0.9 0.9 L16.6 8.7 L0.9 16.5 L4.6 8.7Z M4.6 8.7 H14.5" fill="none" stroke="#0aab65" stroke-width="1.5" stroke-linejoin="round"/></svg><svg style="left:768px;top:8.8px" width="16.4" height="18" viewBox="0 0 17 18"><path d="M1 17.2 L2 12.6 L12.2 1.6 Q13.6 0.4 15 1.6 Q16.4 3 15.2 4.4 L5.2 15.4Z M10.6 3.4 L13.6 6.2" fill="none" stroke="#0aab65" stroke-width="1.5" stroke-linejoin="round"/></svg><div class="a" style="left:798px;top:16px;width:3px;height:3px;border-radius:50%;background:#0aab65"></div><div class="a" style="left:805px;top:16px;width:3px;height:3px;border-radius:50%;background:#0aab65"></div><div class="a" style="left:812px;top:16px;width:3px;height:3px;border-radius:50%;background:#0aab65"></div></div>
<div class="hl" style="left:497px;top:743px;width:841px"></div>
<div class="vl" style="left:549px;top:122px;height:621px"></div>
<div class="vl" style="left:639px;top:122px;height:621px"></div>
<div class="vl" style="left:819px;top:122px;height:621px"></div>
<div class="vl" style="left:909px;top:122px;height:621px"></div>
<div class="vl" style="left:1009px;top:122px;height:621px"></div>
<div class="vl" style="left:1204px;top:122px;height:621px"></div>
<div class="a" style="left:497px;top:743px;width:841px;height:2px;background:#dcdcdc"></div>
<div class="t" style="left:521px;top:763px;color:#333;letter-spacing:.2px">Tổng: <b>44</b> bản ghi</div>
<div class="box" style="left:978px;top:755px;width:202px;height:34px;border-color:#7a7a7a"></div>
<div class="t" style="left:987px;top:765px;color:#212121"><span style="letter-spacing:0.40px">20 bản ghi/trang</span></div>
<svg style="left:1158px;top:769px" width="11" height="7" viewBox="0 0 11 7"><path d="M0.5 0.5 L5.5 6.5 L10.5 0.5" fill="none" stroke="#606060" stroke-width="1.3"/></svg>
<div class="a" style="left:1154px;top:779px;width:1px;height:1px;background:#3b9be0"></div>
<svg style="left:1197px;top:767px" width="6" height="10" viewBox="0 0 6 10"><path d="M5.2 0.6 L0.9 5 L5.2 9.4" fill="none" stroke="#bbb" stroke-width="1.4"/></svg>
<div class="a" style="left:1212px;top:761px;width:22px;height:22px;border:1px solid #cfcfcf;background:#efefef;text-align:center;line-height:22px;font-weight:bold;font-size:14px;color:#111">1</div>
<div class="t" style="left:1241px;top:765px;width:22px;text-align:center;font-size:14px;color:#222">2</div>
<div class="t" style="left:1269px;top:765px;width:22px;text-align:center;font-size:14px;color:#222">3</div>
<svg style="left:1298px;top:767px" width="6" height="10" viewBox="0 0 6 10"><path d="M0.8 0.6 L5.1 5 L0.8 9.4" fill="none" stroke="#666" stroke-width="1.5"/></svg>
<div class="a" style="left:1171px;top:106.5px;width:182px;height:82px;background:#fff;border-radius:3px;box-shadow:0 2px 7px rgba(0,0,0,.18)"></div>
<div class="t" style="left:1191.5px;top:122px;color:#3c4052"><span style="letter-spacing:0.30px">Danh sách trúng tuyển</span></div>
<div class="t" style="left:1191.5px;top:158px;color:#3c4052"><span style="letter-spacing:0.21px">Danh sách đã xét tuyển</span></div>
<div id="frame"></div>
</body></html>
